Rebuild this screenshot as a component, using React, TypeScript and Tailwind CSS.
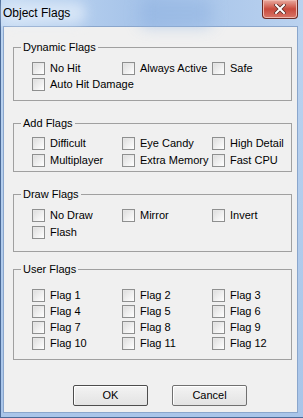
import React from 'react';

type Group = {
	title: string;
	items: string[];
	mt: string;
	pt: string;
	pb: string;
	gap?: string;
};

const groups: Group[] = [
	{
		title: 'Dynamic Flags',
		items: ['No Hit', 'Always Active', 'Safe', 'Auto Hit Damage'],
		mt: 'mt-[14px]',
		pt: 'pt-[6px]',
		pb: 'pb-[8px]',
	},
	{
		title: 'Add Flags',
		items: ['Difficult', 'Eye Candy', 'High Detail', 'Multiplayer', 'Extra Memory', 'Fast CPU'],
		mt: 'mt-[16px]',
		pt: 'pt-[5px]',
		pb: 'pb-[3px]',
		gap: 'gap-y-[1px]',
	},
	{
		title: 'Draw Flags',
		items: ['No Draw', 'Mirror', 'Invert', 'Flash'],
		mt: 'mt-[16px]',
		pt: 'pt-[6px]',
		pb: 'pb-[11px]',
		gap: 'gap-y-[1px]',
	},
	{
		title: 'User Flags',
		items: Array.from({ length: 12 }, (_, i) => `Flag ${i + 1}`),
		mt: 'mt-[11px]',
		pt: 'pt-[11px]',
		pb: 'pb-[8px]',
	},
];

const Checkbox = ({ label }: { label: string }) => (
	<label className="flex h-[16px] items-center gap-[5px] whitespace-nowrap">
		<span className="block h-[13px] w-[13px] shrink-0 border border-[#8e8f8f] bg-gradient-to-br from-[#dcdcdc] to-white shadow-[inset_1px_1px_0_#e6e6e6]" />
		<span>{label}</span>
	</label>
);

const FlagGroup = ({ group }: { group: Group }) => (
	<fieldset className={`${group.mt} ml-[9px] w-[279px] min-w-0 border border-[#a0a0a0]`}>
		<legend className="ml-[7px] px-[2px] leading-[13px]">{group.title}</legend>
		<div
			className={`grid grid-cols-[90px_90px_1fr] ${group.gap ?? ''} pl-[18px] ${group.pt} ${group.pb}`}
		>
			{group.items.map((item) => (
				<Checkbox key={item} label={item} />
			))}
		</div>
	</fieldset>
);

const WinButton = ({ children, isDefault }: { children: React.ReactNode; isDefault?: boolean }) => (
	<button
		className={`h-[21px] w-[75px] rounded-[2px] border bg-gradient-to-b from-[#f3f3f3] to-[#e3e3e3] text-[11px] leading-none text-black shadow-[inset_1px_1px_0_#ffffff] ${
			isDefault ? 'border-[#4d4d4d]' : 'border-[#707070]'
		}`}
	>
		{children}
	</button>
);

export default function App() {
	return (
		<div
			className="flex h-[418px] w-[303px] flex-col border-b border-l border-[#4a6a98] bg-gradient-to-b from-[#bcd4f0] to-[#a9c5e9] text-[11px] text-black"
			style={{ fontFamily: '"Liberation Sans", Arial, sans-serif' }}
		>
			<div className="relative flex h-[26px] shrink-0 items-center bg-gradient-to-r from-[#c4daf3] via-[#a3c1e8] to-[#bad2ef]">
				<div className="absolute left-0 top-[2px] h-[22px] w-[85px] rounded-full bg-[#e4eefa] opacity-70 blur-[6px]" />
				<div className="absolute left-[140px] top-0 h-[26px] w-[70px] bg-[#93b5e2] opacity-60 blur-[8px]" />
				<span className="relative pl-[2px] text-[12px] leading-none">Object Flags</span>
				<div className="absolute left-[261px] top-0 flex h-[19px] w-[36px] items-center justify-center rounded-b-[4px] border border-t-0 border-[#6b2b25] bg-gradient-to-b from-[#e8aaa0] via-[#c8493c] to-[#d77568] shadow-[inset_0_0_0_1px_#f0b8ae]">
					<svg width="12" height="10" viewBox="0 0 12 10">
						<path d="M2 1 L10 9 M10 1 L2 9" stroke="#5a2a26" strokeWidth="3.6" strokeLinecap="square" />
						<path d="M2 1 L10 9 M10 1 L2 9" stroke="#ffffff" strokeWidth="2" strokeLinecap="square" />
					</svg>
				</div>
			</div>
			<div className="mb-[4px] ml-[2px] mr-[5px] flex flex-1 flex-col border border-[#8aa6cc] bg-[#f0f0f0]">
				{groups.map((g) => (
					<FlagGroup key={g.title} group={g} />
				))}
				<div className="ml-[69px] mt-[25px] flex gap-[24px]">
					<WinButton isDefault>OK</WinButton>
					<WinButton>Cancel</WinButton>
				</div>
			</div>
		</div>
	);
}
